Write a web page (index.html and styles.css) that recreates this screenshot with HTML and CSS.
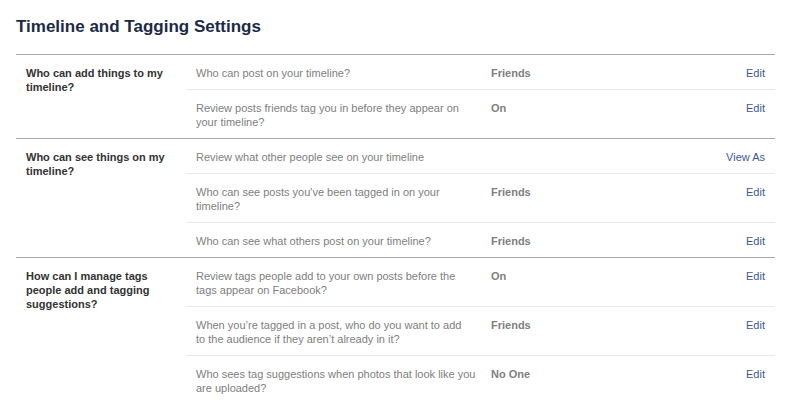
FILE: index.html
```html
<!DOCTYPE html>
<html>
<head>
<meta charset="utf-8">
<link rel="stylesheet" href="styles.css">
</head>
<body>
<div class="page">
  <h2 class="title">Timeline and Tagging Settings</h2>

  <div class="section">
    <div class="label">Who can add things to my timeline?</div>
    <div class="rows">
      <div class="row">
        <div class="desc">Who can post on your timeline?</div>
        <div class="value">Friends</div>
        <a class="action">Edit</a>
      </div>
      <div class="row">
        <div class="desc">Review posts friends tag you in before they appear on your timeline?</div>
        <div class="value">On</div>
        <a class="action">Edit</a>
      </div>
    </div>
  </div>

  <div class="section">
    <div class="label">Who can see things on my timeline?</div>
    <div class="rows">
      <div class="row">
        <div class="desc">Review what other people see on your timeline</div>
        <div class="value"></div>
        <a class="action">View As</a>
      </div>
      <div class="row">
        <div class="desc">Who can see posts you've been tagged in on your timeline?</div>
        <div class="value">Friends</div>
        <a class="action">Edit</a>
      </div>
      <div class="row">
        <div class="desc">Who can see what others post on your timeline?</div>
        <div class="value">Friends</div>
        <a class="action">Edit</a>
      </div>
    </div>
  </div>

  <div class="section">
    <div class="label">How can I manage tags people add and tagging suggestions?</div>
    <div class="rows">
      <div class="row">
        <div class="desc">Review tags people add to your own posts before the tags appear on Facebook?</div>
        <div class="value">On</div>
        <a class="action">Edit</a>
      </div>
      <div class="row">
        <div class="desc">When you’re tagged in a post, who do you want to add<br>to the audience if they aren’t already in it?</div>
        <div class="value">Friends</div>
        <a class="action">Edit</a>
      </div>
      <div class="row">
        <div class="desc">Who sees tag suggestions when photos that look like you are uploaded?</div>
        <div class="value">No One</div>
        <a class="action">Edit</a>
      </div>
    </div>
  </div>
</div>
</body>
</html>
```

FILE: styles.css
```css
html, body {
  margin: 0;
  padding: 0;
  background: #ffffff;
}

body {
  font-family: "Liberation Sans", Arial, sans-serif;
  font-size: 11px;
  line-height: 14px;
  color: #333333;
}

.page {
  width: 759px;
  padding: 0 0 0 16px;
}

.title {
  margin: 0;
  padding: 17px 0 17px 0;
  font-size: 17px;
  line-height: 20px;
  font-weight: bold;
  color: #1c2a47;
}

.section {
  display: flex;
  border-top: 1px solid #aaaaaa;
}

.label {
  width: 150px;
  padding: 11px 10px 9px 10px;
  font-weight: bold;
  color: #333333;
}

.rows {
  flex: 1;
  display: flex;
  flex-direction: column;
}

.row {
  display: flex;
  align-items: flex-start;
  padding: 11px 10px 9px 10px;
  border-top: 1px solid #e9e9e9;
}

.row:first-child {
  border-top: none;
}

.desc {
  width: 282px;
  color: #808080;
}

.value {
  margin-left: 13px;
  flex: 1;
  font-weight: bold;
  color: #808080;
}

.action {
  color: #3b5998;
  text-decoration: none;
  cursor: pointer;
}
```
